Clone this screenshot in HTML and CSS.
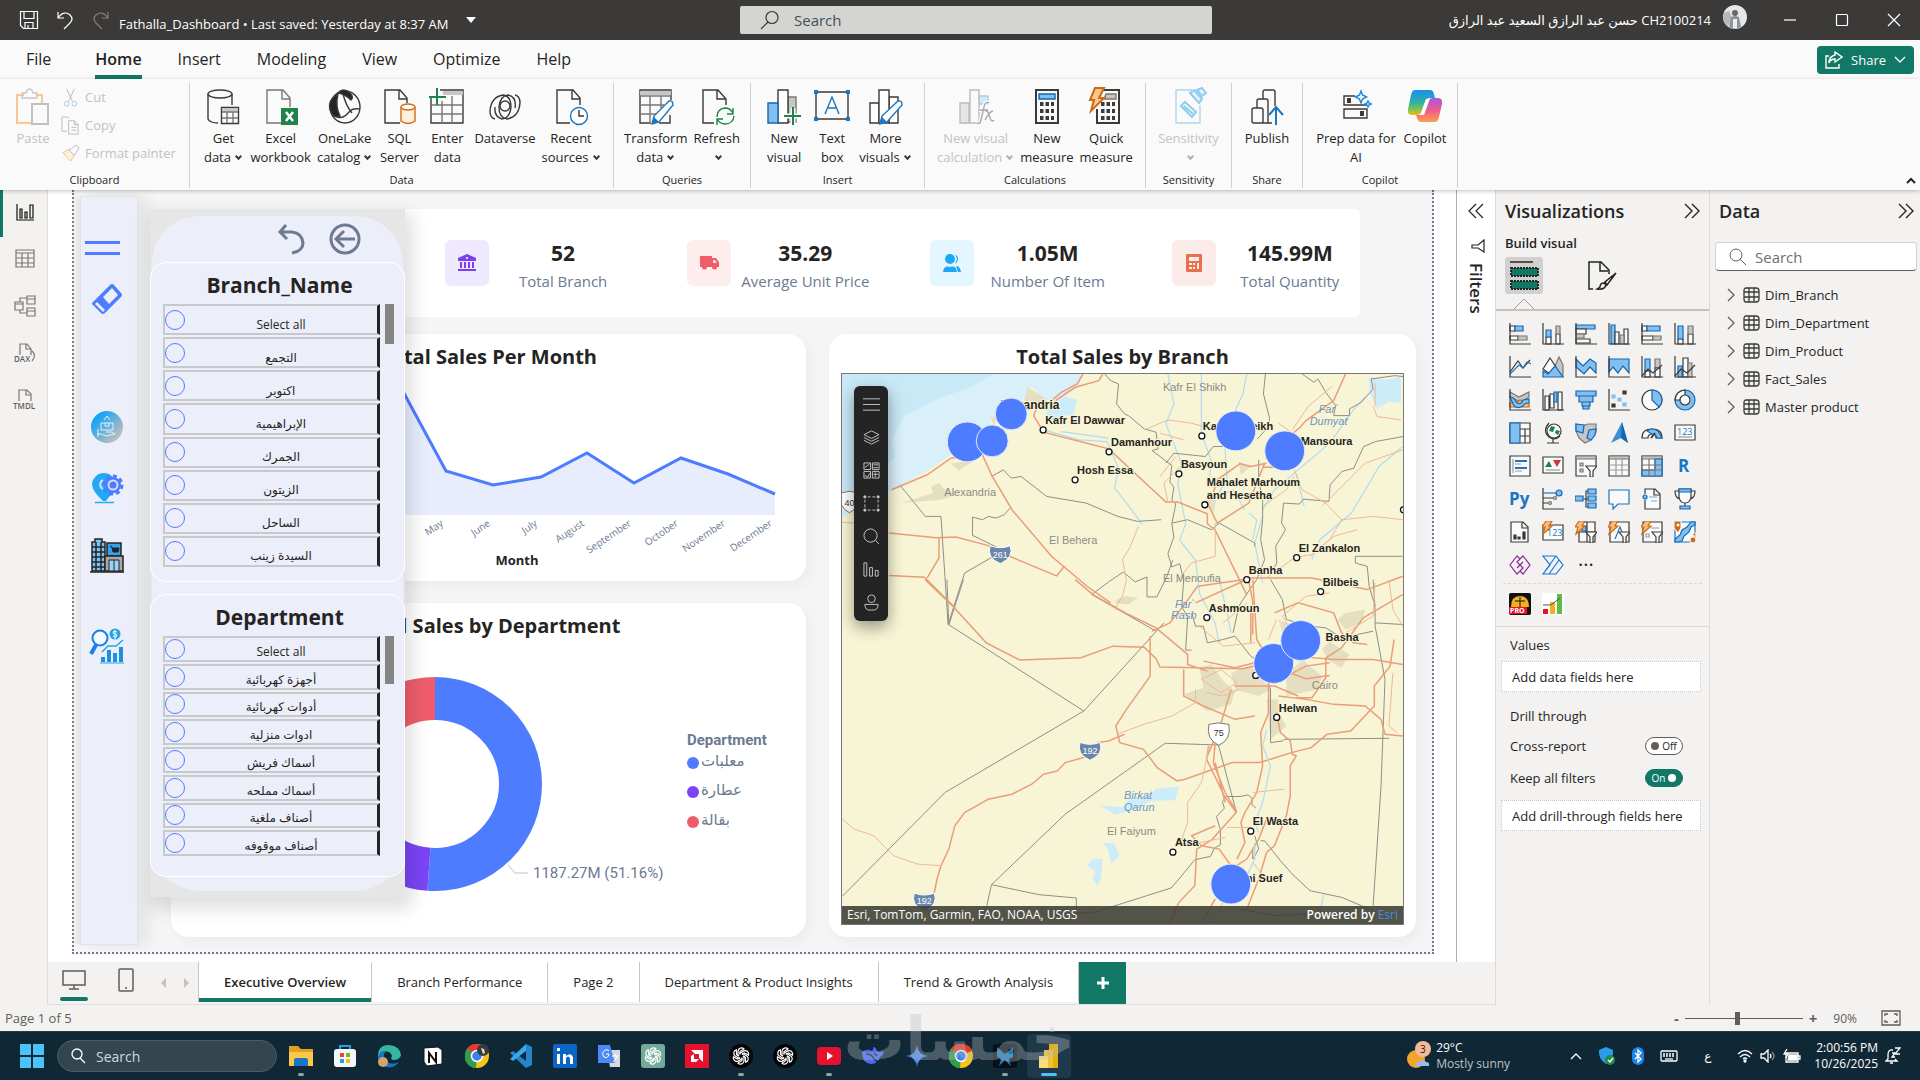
FILE: index.html
```html
<!DOCTYPE html>
<html lang="en">
<head>
    <meta charset="UTF-8">
    <meta name="viewport" content="width=device-width, initial-scale=1.0">
    <title>Fathalla_Dashboard</title>
    <link rel="stylesheet" href="styles.css">
</head>
<body>
    <!-- title bar -->
    <header class="titlebar">
        <div class="title-left">
            <button class="tb-btn" aria-label="Save"><svg width="20" height="20" viewBox="0 0 20 20"><path d="M1.500 1.500h17v17h-14l-3-3zM5 1.500v7h10v-7M6 18.500v-6h8v6M9 15v3"/></svg></button>
            <button class="tb-btn" aria-label="Undo"><svg width="20" height="20" viewBox="0 0 20 20"><path d="M3 2v6h6M3 8c4-6 9-6 12-3s2 6 0 8l-6 6"/></svg></button>
            <button class="tb-btn dim" aria-label="Redo"><svg width="20" height="20" viewBox="0 0 20 20"><path d="M17 2v6h-6M17 8c-4-6-9-6-12-3s-2 6 0 8l6 6"/></svg></button>
            <span class="file-name">Fathalla_Dashboard • Last saved: Yesterday at 8:37 AM</span>
            <svg class="file-caret" width="10" height="6" viewBox="0 0 10 6"><path d="M0 0h10L5 6z"/></svg>
        </div>
        <label class="title-search">
            <svg width="20" height="20" viewBox="0 0 20 20"><circle cx="12" cy="7.500" r="6"/><path d="M8 12l-7 7"/></svg>
            <input type="text" placeholder="Search" aria-label="Search">
        </label>
        <div class="title-right">
            <span class="user" dir="rtl">CH2100214 حسن عبد الرازق السعيد عبد الرازق</span>
            <svg class="avatar" width="24" height="24" viewBox="0 0 24 24"><circle cx="12" cy="12" r="12" fill="#e4e6e8"/><path d="M1 8a12 12 0 0 0 4 13l4-8-3-7z" fill="#b4b8ba"/><circle cx="12" cy="8" r="3" fill="#75665c"/><path d="M8 12q4-2 8 0l2 10q-6 3-12 0z" fill="#8d9498"/><path d="M10 14h4v9h-4z" fill="#eee"/></svg>
            <button class="win-btn" aria-label="Minimize"><svg width="14" height="14" viewBox="0 0 14 14"><path d="M1 7h12"/></svg></button>
            <button class="win-btn" aria-label="Maximize"><svg width="14" height="14" viewBox="0 0 14 14"><rect x="1.500" y="1.500" width="11" height="11" rx="1"/></svg></button>
            <button class="win-btn" aria-label="Close"><svg width="14" height="14" viewBox="0 0 14 14"><path d="M1 1l12 12M13 1L1 13"/></svg></button>
        </div>
    </header>

    <!-- ribbon -->
    <nav class="menu">
        <a href="#" class="file">File</a>
        <a href="#" class="active">Home</a>
        <a href="#">Insert</a>
        <a href="#">Modeling</a>
        <a href="#">View</a>
        <a href="#">Optimize</a>
        <a href="#">Help</a>
        <button class="share-btn"><svg width="18" height="18" viewBox="0 0 18 18"><path d="M4 5H1v12h13v-4M10 1l7 5-7 5V8c-3 0-5 1-6 4 0-5 2-7 6-8z"/></svg>Share<svg width="12" height="8" viewBox="0 0 12 8"><path d="M1 1l5 5 5-5"/></svg></button>
    </nav>
    <div class="ribbon">
        <section class="group g-clipboard">
            <div class="tools">
                <button class="tool off"><svg viewBox="0 0 34 36"><path d="M8 6H1v28h14M20 6h6v8" stroke="#f4c993" stroke-width="2"/><path d="M6 4h4q1-4 3.500-4t3.500 4h4v5H6z" stroke="#c8c8c8"/><path d="M16 15h16v20H16z" fill="#fafafa" stroke="#c0c0c0" stroke-width="2"/></svg>Paste</button>
                <div class="mini">
                    <button class="mini-btn"><svg viewBox="0 0 20 20"><path d="M6 1l6 13M14 1L8 14" stroke="#bbb"/><circle cx="6" cy="16.500" r="2.500" stroke="#9fcbe8"/><circle cx="14" cy="16.500" r="2.500" stroke="#9fcbe8"/></svg>Cut</button>
                    <button class="mini-btn"><svg viewBox="0 0 20 20"><path d="M6 16H1V1h6l2 2M8 5h6l4 4v10H8zM14 5v4h4M11 12h5M11 15h5" stroke="#bbb"/></svg>Copy</button>
                    <button class="mini-btn"><svg viewBox="0 0 20 20"><path d="M2 9l8 9 4-6-6-6z" fill="#fdf0dd" stroke="#f0bf85"/><path d="M8 6l6 6 2-3 3-5-3-3-5 4z" fill="#fafafa" stroke="#bbb"/></svg>Format painter</button>
                </div>
            </div>
            <h2>Clipboard</h2>
        </section>
        <section class="group g-data">
            <div class="tools">
                <button class="tool"><svg viewBox="0 0 34 36"><ellipse cx="14" cy="5" rx="12" ry="4"/><path d="M2 5v25q2 4 10 4M26 5v11"/><path d="M15.500 18.500h17v16h-17z" fill="#fafafa"/><path d="M16 19h16v4H16z" fill="#c8c6c4" stroke="none"/><path d="M16 23h16M16 29h16M21 23v11M27 23v11" stroke="#797775"/></svg>Get<br>data<i></i></button>
                <button class="tool"><svg viewBox="0 0 34 36"><path d="M18 34H3V1h16l7 8v9" stroke="#797775"/><path d="M18 1v9h8" stroke="#797775"/><path d="M17 19h17v17H17z" fill="#1d8348" stroke="none"/><path d="M22 23l7 9M29 23l-7 9" stroke="#fff" stroke-width="2.500"/></svg>Excel<br>workbook</button>
                <button class="tool"><svg viewBox="0 0 34 36"><ellipse cx="17" cy="18" rx="15" ry="16"/><path d="M10 4q5-6 12 0 4 4 1 7-6-6-13-7zM10 5Q-2 12 3 23q2 6 9 4-5-10-2-22z" fill="#252423"/><path d="M15 5q3 12 9 19M4 25q9 8 17-2 3-4 11-3"/></svg>OneLake<br>catalog<i></i></button>
                <button class="tool"><svg viewBox="0 0 34 36"><path d="M18 34H3V1h15l7 8v5M17 1v9h8"/><path d="M19 18v14q7 5 14 0V18" fill="#fdf0dd" stroke="#ce6b12"/><ellipse cx="26" cy="18" rx="7" ry="3" fill="#fff" stroke="#ce6b12"/></svg>SQL<br>Server</button>
                <button class="tool"><svg viewBox="0 0 34 36"><path d="M10 1h23v33H1V9"/><path d="M13 2h20v4H13z" fill="#c8c6c4" stroke="none"/><path d="M1 16h32M1 25h32M12 12v22M22 7v27" stroke="#797775"/><path d="M7-1v17M-1 8h17" stroke="#1d8348" stroke-width="2"/></svg>Enter<br>data</button>
                <button class="tool"><svg viewBox="0 0 34 36"><circle cx="17" cy="17" r="5"/><path d="M27 6q5 1 5 8-1 14-13 16-8-1-8-12 1-11 9-12 9 2 7 13M7 30q-5-1-5-8Q3 8 15 6q8 1 8 12-1 11-9 12-8-2-7-12"/></svg>Dataverse</button>
                <button class="tool"><svg viewBox="0 0 34 36"><path d="M16 34H3V1h16l7 8v7M18 1v9h8"/><circle cx="25" cy="27" r="8.500" fill="#fff" stroke="#1a76c0"/><path d="M25 21v6h5"/></svg>Recent<br>sources<i></i></button>
            </div>
            <h2>Data</h2>
        </section>
        <section class="group g-queries">
            <div class="tools">
                <button class="tool"><svg viewBox="0 0 34 36"><path d="M12 34H1V1h31v10M31 26v8H20"/><path d="M1 2h31v4H1z" fill="#c8c6c4" stroke="none"/><path d="M1 7h31M1 16h24M1 25h16M11 7v27M22 7v12" stroke="#797775"/><path d="M13 35l2-8 15-15q4-1 4 4L20 33z" fill="#fff" stroke="#1a76c0"/><path d="M13 35l2-7 5 5z" fill="#1a76c0" stroke="none"/></svg>Transform<br>data<i></i></button>
                <button class="tool"><svg viewBox="0 0 34 36"><path d="M14 34H3V1h15l8 9v6M17 1v9h9"/><path d="M17 28q0-8 8-9 5 0 8 5M33 19v6h-6M34 27q-1 8-9 8-5 0-8-5M17 36v-6h6" stroke="#1d8348"/></svg>Refresh<br><i></i></button>
            </div>
            <h2>Queries</h2>
        </section>
        <section class="group g-insert">
            <div class="tools">
                <button class="tool"><svg viewBox="0 0 34 36"><path d="M21 8h8v25h-8z" fill="#c8c6c4" stroke="#797775"/><path d="M11 1h10v33H11z" fill="#fff"/><path d="M1 14h10v20H1z" fill="#83beec" stroke="#1267b4"/><path d="M26 19v17M17 27h17" stroke="#fafafa" stroke-width="5"/><path d="M26 18v18M17 27h17" stroke="#1d8348" stroke-width="2"/></svg>New<br>visual</button>
                <button class="tool"><svg viewBox="0 0 34 36"><path d="M1 3h32v27H1z"/><path d="M10 25L17 8l7 17M12.500 19h9" stroke="#1a76c0"/><path d="M-1 1h4v4h-4zM31 1h4v4h-4zM-1 28h4v4h-4zM31 28h4v4h-4z" fill="#1a76c0" stroke="none"/></svg>Text<br>box</button>
                <button class="tool"><svg viewBox="0 0 34 36"><path d="M1 14h9v20H1zM20 8h9v26h-9z" fill="#fff"/><path d="M10 1h10v33H10z" fill="#fff"/><path d="M11 35l2-8 16-15q4-1 4 4L18 33z" fill="#fff" stroke="#1a76c0"/><path d="M11 35l2-7 5 5z" fill="#1a76c0" stroke="none"/></svg>More<br>visuals<i></i></button>
            </div>
            <h2>Insert</h2>
        </section>
        <section class="group g-calc">
            <div class="tools">
                <button class="tool off"><svg viewBox="0 0 34 36"><path d="M20 7h9v8h-9z" fill="#d4e8f6" stroke="#a8d0ea"/><path d="M1 14h9v20H1z" fill="#e6e6e6" stroke="#bbb"/><path d="M11 1h9v33h-9z" fill="#fafafa" stroke="#bbb"/><path d="M30 14q-4-2-5 4l-3 13q-1 5-4 3M20 21h9M26 22q3-1 4 4l2 5q1 2 3 0M34 22q-3 0-8 9" stroke="#fafafa" stroke-width="4"/><path d="M30 14q-4-2-5 4l-3 13q-1 5-4 3M20 21h9M26 22q3-1 4 4l2 5q1 2 3 0M34 22q-3 0-8 9" stroke="#aaa"/></svg>New visual<br>calculation<i></i></button>
                <button class="tool"><svg viewBox="0 0 34 36"><path d="M6 1h22v33H6z" stroke-width="2"/><path d="M9 5h16v5H9z" fill="#83beec" stroke="#1267b4"/><path d="M10 15h14M10 22h14M10 29h14" stroke-width="4" stroke-dasharray="3.500 2"/></svg>New<br>measure</button>
                <button class="tool"><svg viewBox="0 0 34 36"><path d="M14 1h16v33H8V20" stroke-width="2"/><path d="M17 5h10v5H15z" fill="#c8c6c4" stroke="#797775"/><path d="M12 15h14M12 22h14M12 29h14" stroke-width="4" stroke-dasharray="3.500 2"/><path d="M6-1h9L10 9h5L2 22l3-11H1z" fill="#f8c88e" stroke="#ce6b12" stroke-width="2"/></svg>Quick<br>measure</button>
            </div>
            <h2>Calculations</h2>
        </section>
        <section class="group g-sens">
            <div class="tools">
                <button class="tool off"><svg viewBox="0 0 34 36"><path d="M20 1H4v33h24V16" stroke="#a8d8f4"/><path d="M9 17l4-4 11 10-4 5zM12 17l9 8" fill="#fafafa" stroke="#8fcbee" stroke-width="2"/><path d="M18 4l9 10 3-4-8-9zM25 1l5 6 4-3-4-5z" fill="#e4f2fb" stroke="#8fcbee" stroke-width="2"/></svg>Sensitivity<br><i></i></button>
            </div>
            <h2>Sensitivity</h2>
        </section>
        <section class="group g-share">
            <div class="tools">
                <button class="tool"><svg viewBox="0 0 34 36"><path d="M11 34H4q-2 0-2-2V21q0-2 2-2h7q2 0 2 2v13zM7 19v-7q0-2 2-2h7q2 0 2 2v22h-7M13 10V3q0-2 2-2h8q2 0 2 2v14M18 34h4"/><path d="M26 36V18M19 26l7-8 7 8" stroke="#1a76c0" stroke-width="2"/></svg>Publish</button>
            </div>
            <h2>Share</h2>
        </section>
        <section class="group g-copilot">
            <div class="tools">
                <button class="tool prep"><svg viewBox="0 0 34 36"><path d="M16 7H5v9h23M5 20h23v9H5z"/><path d="M8 9h4v5H8zM21 22h4v5h-4z" fill="#3b3a39" stroke="none"/><path d="M22 2l1.500 4 4 2-4 2-1.500 4-1.500-4-4-2 4-2zM29 12l1 2 2 1-2 1-1 2-1-2-2-1 2-1z" stroke="#1a86d9"/></svg>Prep data for AI</button>
                <button class="tool"><svg viewBox="0 0 34 36"><defs><linearGradient id="cp1" x1="0" y1="0" x2="0" y2="1"><stop offset="0" stop-color="#1a8df0"/><stop offset=".5" stop-color="#2fb3a0"/><stop offset=".8" stop-color="#8bc34a"/><stop offset="1" stop-color="#f5b91c"/></linearGradient><linearGradient id="cp2" x1="0" y1="0" x2="0" y2="1"><stop offset="0" stop-color="#a458e8"/><stop offset=".5" stop-color="#ee5a8e"/><stop offset="1" stop-color="#f9a14c"/></linearGradient></defs><path d="M7 1h15q3 0 4 4l1 4h-5q-4 0-5 4l-3 9q-1 4-5 4H4q-5 0-4-6L3 6q1-5 4-5z" fill="url(#cp1)" stroke="none"/><path d="M27 33H13q-3 0-4-4l-1-3h4q4 0 5-4l3-9q1-4 5-4h5q5 0 4 6l-3 13q-1 5-4 5z" fill="url(#cp2)" stroke="none"/><path d="M18 10h4l-6 16h-4z" fill="#fff" stroke="none" opacity=".85"/></svg>Copilot</button>
            </div>
            <h2>Copilot</h2>
        </section>
        <button class="collapse" aria-label="Collapse ribbon"><svg width="10" height="7" viewBox="0 0 10 7"><path d="M1 6l4-4 4 4"/></svg></button>
    </div>

    <div class="workspace">
        <!-- view switcher -->
        <aside class="rail">
            <button class="rail-btn active" aria-label="Report view"><svg viewBox="0 0 22 22"><path d="M3 3v16h17M6 8h2v9H6zM11 11h2v6h-2zM16 4h3v13h-3z" stroke="#111"/></svg></button>
            <button class="rail-btn" aria-label="Table view"><svg viewBox="0 0 22 22"><path d="M2 2h18v17H2zM2 5h18M2 10h18M2 15h18M8 5v14M14 5v14"/></svg></button>
            <button class="rail-btn" aria-label="Model view"><svg viewBox="0 0 22 22"><path d="M1 7h8v8H1zM13 1h8v8h-8zM13 13h8v8h-8zM1 9h8M13 4h8M13 16h8M6 7V3h7M6 15v3h7"/></svg></button>
            <button class="rail-btn" aria-label="DAX query view"><svg viewBox="0 0 22 22"><path d="M6 13V2h7l4 5v6M12 2v5h5M18 9q5 4 0 10"/><text x="0" y="20">DAX</text></svg></button>
            <button class="rail-btn" aria-label="TMDL view"><svg viewBox="0 0 22 22"><path d="M5 12V1h8l4 4v7M12 1v5h5"/><text x="-1" y="20">TMDL</text></svg></button>
        </aside>

        <div class="center">
            <main class="canvas">
                <div class="report">
                    <div class="sidebar">
                        <button class="side-btn lines" aria-label="Toggle panel"></button>
                        <button class="side-btn eraser" aria-label="Clear filters"><svg width="34" height="34" viewBox="0 0 34 34"><path d="M3 20L20 3q2-2 4 0l7 8q2 2 0 4L15 31q-2 2-4 0l-8-8q-2-1 0-3z" fill="#4d7cff"/><path d="M13 15l9-9 6 7-9 9zM7 20l8 8-2 2-8-8z" fill="#eceff9"/></svg></button>
                        <button class="side-btn s1" aria-label="Product"><svg width="34" height="34" viewBox="0 0 34 34"><defs><linearGradient id="sg" x1="0" y1="0" x2="1" y2="1"><stop offset=".2" stop-color="#18a4f4"/><stop offset=".8" stop-color="#b8bcc0"/></linearGradient></defs><circle cx="17" cy="17" r="16" fill="url(#sg)"/><path d="M7 24h4l5 2 9-2-3-2h-6M11 13h12v7H11zM15 13v3h4v-3M14 10l3-4 3 4M8 19v8" stroke="#dff2fc" fill="none"/></svg></button>
                        <button class="side-btn s2" aria-label="Locations"><svg width="34" height="34" viewBox="0 0 34 34"><path d="M14 2a12 12 0 0 1 10 6v14q-5 3-8 8h-3Q2 20 2 13A12 12 0 0 1 14 2z" fill="#21a9f5"/><path d="M5 31.500h19" stroke="#21a9f5" stroke-width="1.500"/><circle cx="23" cy="14" r="8" fill="#4d7cff"/><circle cx="23" cy="14" r="9" fill="none" stroke="#4d7cff" stroke-width="3" stroke-dasharray="4 3"/><circle cx="23" cy="14" r="4.500" fill="none" stroke="#cfe0ff" stroke-width="2"/><path d="M13 9a5 5 0 0 0 0 9" fill="none" stroke="#cfe0ff" stroke-width="2"/></svg></button>
                        <button class="side-btn s3" aria-label="Branches"><svg width="36" height="38" viewBox="0 0 36 38"><path d="M6 2h7v3h3v29H3V5h3z" fill="#7cc2f5" stroke="#252423" stroke-width="1.500"/><path d="M3 10h13M3 15h13M3 20h13M3 25h13M3 30h13M7 5v29M12 5v29M1 35h34" stroke="#252423" stroke-width="1.500"/><path d="M18 6h14v13H18z" fill="#35a0ee" stroke="#252423" stroke-width="1.500"/><path d="M21 9l2 1 1 5h5l1-4h-7" fill="#252423" stroke="#252423"/><path d="M16 19h18v15H16z" fill="#a9a9a9" stroke="#252423" stroke-width="1.500"/><path d="M20 23h10v11H20z" fill="#9bd4fb" stroke="#252423"/><path d="M25 23v11" stroke="#252423"/></svg></button>
                        <button class="side-btn s4" aria-label="Trends"><svg width="36" height="36" viewBox="0 0 36 36"><circle cx="11" cy="10" r="7.500" fill="#f4f8ff" stroke="#1a7fe8" stroke-width="2"/><path d="M7 17l-5 9" stroke="#1a7fe8" stroke-width="4"/><circle cx="26" cy="6" r="5.500" fill="#22a6e0"/><path d="M28 4q-4-2-4 0 0 2 2 2t2 2q-1 2-4 0M26 2v9" fill="none" stroke="#fff"/><path d="M13 24l6-6h8l7-6" fill="none" stroke="#22a6e0" stroke-width="1.500"/><path d="M12 29h4v5h-4zM18 22h4v12h-4zM24 25h4v9h-4zM30 19h4v15h-4z" fill="#1a8fe4"/><path d="M11 35h24" stroke="#22a6e0"/></svg></button>
                    </div>

                    <div class="board">
                        <div class="kpis">
                            <div class="kpi"><span class="tile t1"><svg width="20" height="18" viewBox="0 0 20 18"><path d="M10 0l9 4v3H1V4zM3 8h2v6H3zM7 8h2v6H7zM11 8h2v6h-2zM15 8h2v6h-2zM1 15h18v2H1z" fill="#7b3ff2"/><circle cx="10" cy="4" r="1" fill="#fff"/></svg></span><p><b>52</b>Total Branch</p></div>
                            <div class="kpi"><span class="tile t2"><svg width="20" height="16" viewBox="0 0 20 16"><path d="M1 1h12v2h4l3 4v5h-2a2.500 2.500 0 0 1-5 0H8a2.500 2.500 0 0 1-5 0H1z" fill="#ef5d68"/><path d="M14 5h2l2 3h-4z" fill="#fbd9d4"/></svg></span><p><b>35.29</b>Average Unit Price</p></div>
                            <div class="kpi"><span class="tile t3"><svg width="20" height="18" viewBox="0 0 20 18"><circle cx="8" cy="5" r="5" fill="#1ba8f5"/><path d="M1 18q1-7 7-5 6-2 7 5z" fill="#1ba8f5"/><path d="M13 0q6 5 0 10l2-5zM14 12q4 0 5 6h-3z" fill="#1ba8f5"/></svg></span><p><b>1.05M</b>Number Of Item</p></div>
                            <div class="kpi"><span class="tile t4"><svg width="16" height="18" viewBox="0 0 16 18"><rect width="16" height="18" rx="1" fill="#e8704a"/><path d="M3 3h10v4H3zM3 9h3v2H3zM3 13h3v2H3zM7 9h2v2H7zM7 13h2v2H7zM11 9h2v6h-2z" fill="#fdeeea"/></svg></span><p><b>145.99M</b>Total Quantity</p></div>
                        </div>

                        <div class="cards">
                            <section class="card c-line">
                                <h3>Total Sales Per Month</h3>
                                <svg class="plot" viewBox="0 0 635 207">
                                    <path d="M87 59L134 19 181 34 228 12 275 99 322 113 370 105 416 81 463 111 510 86 557 102 604 122V143H87z" fill="#e8edfe"/>
                                    <path d="M87 59L134 19 181 34 228 12 275 99 322 113 370 105 416 81 463 111 510 86 557 102 604 122" fill="none" stroke="#4d7cff" stroke-width="3"/>
                                    <g class="months">
                                        <text transform="translate(273 153) rotate(-34)">May</text>
                                        <text transform="translate(320 153) rotate(-34)">June</text>
                                        <text transform="translate(367 153) rotate(-34)">July</text>
                                        <text transform="translate(414 153) rotate(-34)">August</text>
                                        <text transform="translate(461 153) rotate(-34)">September</text>
                                        <text transform="translate(508 153) rotate(-34)">October</text>
                                        <text transform="translate(555 153) rotate(-34)">November</text>
                                        <text transform="translate(602 153) rotate(-34)">December</text>
                                    </g>
                                    <text class="axis-title" x="346" y="193">Month</text>
                                </svg>
                            </section>
                            <section class="card c-donut">
                                <h3>Total Sales by Department</h3>
                                <svg class="plot" viewBox="0 0 635 294">
                                    <g fill="none" stroke-width="43" transform="rotate(-90 264 143)">
                                        <circle cx="264" cy="143" r="85.500" stroke="#4d7cff" pathLength="100" stroke-dasharray="51.160 100"/>
                                        <circle cx="264" cy="143" r="85.500" stroke="#7b44f5" pathLength="100" stroke-dasharray="26 100" stroke-dashoffset="-51.160"/>
                                        <circle cx="264" cy="143" r="85.500" stroke="#ef5d6c" pathLength="100" stroke-dasharray="22.840 100" stroke-dashoffset="-77.160"/>
                                    </g>
                                    <path d="M337 224l7 8h13" fill="none" stroke="#bcc1cb"/>
                                    <text class="callout" x="362" y="237">1187.27M (51.16%)</text>
                                    <text class="legend-title" x="516" y="104">Department</text>
                                    <circle cx="522" cy="122" r="6" fill="#4d7cff"/>
                                    <circle cx="522" cy="151" r="6" fill="#7b44f5"/>
                                    <circle cx="522" cy="181" r="6" fill="#ef5d6c"/>
                                    <text class="legend" x="530" y="125">معلبات</text>
                                    <text class="legend" x="530" y="154">عطارة</text>
                                    <text class="legend" x="530" y="184">بقالة</text>
                                </svg>
                            </section>
                            <section class="card c-map">
                                <h3>Total Sales by Branch</h3>
                                <div class="map">
                                    <svg class="map-svg" viewBox="0 0 563 551" preserveAspectRatio="xMidYMid slice">
                                        <rect width="563" height="551" fill="#f7f5d5"/>
                                        <g transform="scale(.3954 .3333) translate(-53 -552)">
                                            <path class="sea" d="M53 552H665L655 590 610 625 560 635 545 600 530 590 525 620 495 640 470 660 432 690 432 715 400 745 330 795 260 850 200 890 150 920 53 985z"/>
                                            <path class="sea deep" d="M53 552H440L380 590 290 630 210 680 180 750 190 800 130 870 53 920z"/>
                                            <path class="lake" d="M580 640l40-20 30 10-10 50-30-5 5 30-45-20zM1390 560l40 10 40-10v80l-30-5-30 20-20-50z"/>
                                            <path class="urban" d="M525 590l10 10 40 30-30 20-40 30zM280 890l20-10 15 20 30 15-40 15-100 10 80-30zM330 820l60-8-40 30zM430 680l15 5-5 25zM750 1230l20-10 35 5-30 20-30-5zM1060 820l30 10-25 25zM975 930l30-10-10 50z"/>
                                            <g transform="translate(0 1170)">
                                                <path class="urban" d="M960 265l30-10 30 50 30 30-10 40-60 20-60-50 50-20zM1040 280l50-20 50 70-30 20-60-20zM1180 290l40-50 50 50-10 40-80 20zM1270 210l20-25 50 40-20 40-30-20zM1330 100l50-10-10 40-40 20-20-30zM1160 120l60 30-30 30-20-20zM1130 360h30v40l20 40-40 40zM755 60l20-10 25 5-20 20z"/>
                                                <path class="lake" d="M705 678l20 2 40 5 20-30 50-5 15-22 58-5-10 40-60 2-30 20-60 22zM715 790l30 5 12 35-20 25-8-40zM690 840h25l-5 60-8 22-12-22 5-25-20-15z"/>
                                            </g>
                                            <g class="river">
                                                <path d="M880 552l15 90-20 60 40 120-10 60 20 120-15 50 40 60 10 100 40 90 10 60"/>
                                                <path d="M1080 552l-10 60-35 90-10 80 5 90-30 50"/>
                                                <path d="M965 552v180l25 80-5 60M565 720l90 30 70 5 30 80-10 60 40 60 30 50M610 725l120 20"/>
                                                <path d="M1120 960l30-60 80-80 60-60 60-100 30-40M1120 980l-20 80 20 120M1475 770l-60 60-70 140-80 80-20 60"/>
                                                <path d="M1085 970l20 20-10 60M1075 960l-30-60-20 10M1205 850l20 100M1010 1170l20 100 10 60"/>
                                            </g>
                                            <g class="border">
                                                <path d="M720 552l15 20 20 10-5 60 20 30 10 5 40 40 30 10 5 50-15 5 50 45-5 50 10 15-5 40 10 10-10 60 5 40-15 50 10 40 20-10 10 50-5 80 15 30-5 100 15 0"/>
                                                <path d="M1127 552l-5 60 15 70 0 25-30 40M1110 810l0 60 10 60 0 60-5 60 10 60-20 60-35 60-10 20-15 80"/>
                                                <path d="M1220 552l30 25 10-10 20 40 25 40-5 30 40 0 0-20 30-20 30-40-5-30 60-10 40 5M1476 740l-70 15-30 15-25 65-30 10-30 40-3 50-65-7-10 15-40-3-5 60 10 20-25 50 3 50-15 30"/>
                                                <path d="M200 885l35 50 30 45 40 0 10 180 8 145L365 1150l110-75M480 955l-15 20-20 10-20-5-15 10-25-8 0 55 60 35 22 20M433 860l30-20 20 25 25-5 65 60 100 20 80 40 50 15 60-5"/>
                                                <path d="M875 820l20-30 80 10 20-30 40 0 60-20M890 1000l40-10 60 30 20-20 90 60 0 10M687 1215l45-40 35-28 30 30 30-15 0 60 25 0 25-60 15-50"/>
                                                <path d="M1355 1100l120 0M1355 1100l0 20 30 10 5 60 15 60"/>
                                            </g>
                                            <g class="border" transform="translate(0 1170)">
                                                <path d="M320 0l5 136L362 0M325 136L667 395 870 130M687 45l163 110M667 395L315 640 55 952M433 917L620 705 873 492 1008 497l45 200M433 917l-15 80M433 917l120 30 95 10 0 45 40 0 200-75 15-20 45-65 40-10 10-25 15-10 0-45-10-40 20-25-5-20 10-15 35 0 20-5 10 10 0 20 10 10"/>
                                                <path d="M940 100l10 40 20 0 10 50 40-10 30-10 40 60 25 20 15 50 10 30 0 140 0 20 30-5 5-5 265-3M1400 0l5 90 0 50 25 160-10 320-20 360M1115 785l10 0 40 60 30 40 45 50 80 20 80 40M1140 0l30 60 10 60 60 20 40 5 40 30 80-20M1405 130l70 5"/>
                                                <path d="M1095 810l0 30 15-30-10-40M1060 990l90 20 80-5"/>
                                            </g>
                                            <g class="road">
                                                <path d="M665 552l-15 30-40 25-30 30-30 10-10 30 25 50 100 30 65 20 145 160 30 0 75 35 0 30 20 20 70 170 10 25"/>
                                                <path d="M180 900l90-45 60-50 80-10 25 65 50 100 100 140 90 90 60 50M173 1030l120 14 50-2 80 25 30 20 145 72 20-30M300 1045v60l-30 60M173 1158l90 5 80 95"/>
                                                <path d="M715 552l-10 20-60 20-50 40M1330 552l-30 80-70 60-15 20-20 20-20 100-55 0M1060 820l30 10 40-10M980 940l25 60 80-60 40-120"/>
                                                <path d="M1085 1165l160 0 60 15 80 20 90-40M1085 1175l10 60 0 100M990 930l15-60 60-50M950 1240l120-65"/>
                                            </g>
                                            <g class="road thin">
                                                <path d="M53 998l35 2M805 1010l-20 60-20 40 10 60-10 50-20 40M820 720l60-30 60 10 60 20M880 940l-10-60 50-60 50 0M1160 700l60 50 80 0M1200 840l20 60 60 40 40 50-30 60-50 50"/>
                                                <path d="M1320 990l80-10 75 10M1400 650l10 30 60 10M1405 650v-70M1270 950l110-130 95-40M1120 950l60-50 20-40M920 750l-60-20M900 800l-40 60M1000 1000l0 100-60 20-40 60M1130 1165l70-60 40-10M1240 1100l60-60 60-20M1195 720l40-70 60-60"/>
                                            </g>
                                            <g class="road" transform="translate(0 1170)">
                                                <path d="M265 0l70 80 85 110 85 52 155-7 80-35 80 3 30 35 10 25 210 5 50-15 40 15 70 30 60-10M645 0l45 45 90 60 70 40 80 80 0 30 50 20M835 170l0 120-60 100-27 50 10 50 60 20 35 55 50 40 20-5 120-50 70 0 80-30 50-15 40-40 60-10 60-75 0-60 40-60 10-80"/>
                                                <path d="M955 20l-30 50-40 60-45 25M955 20l120-20M1095 0l10 180 30 60 0 100 0 60-20 60 5 100-15 80-30 60-10 30 10 60-20 50M1090 100l0 90M1155 400l10 60 25 25 5 40 10 5-15 30 0 90-10 60-30 90-20 20-20 80-30 90"/>
                                                <path d="M1160 350l70 10 70 15 80 5 40 40 10 45 45 5M1475 45l-100 70-55 90-40 30 0 60-35 60-40 0M1150 100l60-30 90 30 20 60 30 30 35 5M1200 230l100 10 100 0 75 15M1000 490l-5 60 30 90 30 60M920 270l0 80 50 30 80 40 50-10M970 245l80 20 50-15M1050 320l100 0 60 30M1040 330l-25 100-35 100M983 500l-5 40 45 110 30 50-60 80-40 30-5 110-40 50-30 80M1000 550l25 120M305 860l20-50 15-70 25-40 60-40 60-15 50-30 30-30 35-10 20-25 60-20M305 860l-10 40-10 60-20 40M700 490l30-5 40-20M1040 860l-30-50-45-10-25-30 60-30"/>
                                                <path d="M1130 720l-20 60-30 60-40 30M1000 960l-30 60M1180 290l50-30 60-10"/>
                                            </g>
                                            <g class="road thin" transform="translate(0 1170)">
                                                <path d="M55 720l30 30 50 20 50 60 60 25 60 5M750 465l70-30 70-25 60-40 0-40M985 500l-20 110-35 60 0 60-15 50 50 10 60-15M1095 640l80-10M1030 745l60 0M1095 850l20 30M1200 170l-30-60 60-60 60-10M1330 160l70-50 5-100M1450 280l-10 160 20 20M1440 0l10 90 25 50M960 140l60 60 80-10M1080 70l-60 60M1155 120l-20 60"/>
                                                <path d="M965 300l50-30 40 40-40 30zM980 340l40 10 40-20"/>
                                            </g>
                                            <path class="river" d="M1130 1620l-10 50 20 60-20 110-20 60 10 30M1100 1960l0 50-20 50M1020 2140l-30 60M1275 2115l-10 60"/>
                                        </g>
                                        <g class="shield">
                                            <path d="M149 172q10 4 20 0 4 12-10 18-14-6-10-18zM239 369q10 4 20 0 4 12-10 18-14-6-10-18zM73 520q10 4 20 0 4 12-10 18-14-6-10-18z"/>
                                            <text x="159" y="184">261</text><text x="249" y="381">192</text><text x="83" y="531">192</text>
                                        </g>
                                        <g class="shield-w">
                                            <path d="M368 351q10-3 20 0 3 15-10 21-13-6-10-21zM0 119q9-3 16 0 3 15-8 20-5-2-8-8z"/>
                                            <text x="378" y="363">75</text><text x="8" y="132">40</text>
                                        </g>
                                        <g class="city-dots">
                                            <circle cx="202" cy="56" r="3"/><circle cx="268" cy="78" r="3"/><circle cx="234" cy="106" r="3"/><circle cx="338" cy="100" r="3"/><circle cx="361" cy="62" r="3"/><circle cx="364" cy="131" r="3"/><circle cx="456" cy="184" r="3"/><circle cx="406" cy="206" r="3"/><circle cx="480" cy="218" r="3"/><circle cx="366" cy="244" r="3"/><circle cx="436" cy="344" r="3"/><circle cx="332" cy="479" r="3"/><circle cx="410" cy="458" r="3"/><circle cx="415" cy="302" r="3"/><circle cx="563" cy="136" r="3"/>
                                        </g>
                                        <g class="city">
                                            <text class="big" x="157" y="35">Alexandria</text>
                                            <text x="204" y="50">Kafr El Dawwar</text>
                                            <text x="270" y="72">Damanhour</text>
                                            <text x="236" y="100">Hosh Essa</text>
                                            <text x="340" y="94">Basyoun</text>
                                            <text x="362" y="56">Kafr Alsheikh</text>
                                            <text x="460" y="71">Mansoura</text>
                                            <text x="366" y="112">Mahalet Marhoum</text>
                                            <text x="366" y="125">and Hesetha</text>
                                            <text x="458" y="178">El Zankalon</text>
                                            <text x="408" y="200">Banha</text>
                                            <text x="482" y="212">Bilbeis</text>
                                            <text x="368" y="238">Ashmoun</text>
                                            <text x="485" y="267">Basha</text>
                                            <text x="438" y="339">Helwan</text>
                                            <text x="334" y="473">Atsa</text>
                                            <text x="412" y="452">El Wasta</text>
                                            <text x="391" y="509">Beni Suef</text>
                                        </g>
                                        <g class="region">
                                            <text x="322" y="17">Kafr El Shikh</text>
                                            <text x="103" y="122">Alexandria</text>
                                            <text x="208" y="170">El Behera</text>
                                            <text x="322" y="208">El Menoufia</text>
                                            <text x="471" y="316">Cairo</text>
                                            <text x="266" y="462">El Faiyum</text>
                                        </g>
                                        <g class="water">
                                            <text x="478" y="39">Far`</text><text x="469" y="51">Dumyat</text>
                                            <text x="334" y="234">Far`</text><text x="330" y="245">Rash</text>
                                            <text x="283" y="426">Birkat</text><text x="283" y="438">Qarun</text>
                                        </g>
                                        <g class="pins">
                                            <circle cx="126" cy="68" r="20"/><circle cx="151" cy="67" r="16"/><circle cx="170" cy="40" r="16"/><circle cx="395" cy="57" r="20"/><circle cx="444" cy="77" r="20"/><circle cx="433" cy="290" r="20"/><circle cx="460" cy="267" r="20"/><circle cx="390" cy="511" r="20"/>
                                        </g>
                                    </svg>
                                    <div class="map-tools">
                                        <button aria-label="Menu"><svg viewBox="0 0 18 18"><path d="M0 3h18M0 9h18M0 15h18"/></svg></button>
                                        <button aria-label="Layers"><svg viewBox="0 0 18 18"><path d="M9 2l8 4-8 4-8-4zM1 9l8 4 8-4M1 12l8 4 8-4"/></svg></button>
                                        <button aria-label="Basemap"><svg viewBox="0 0 18 18"><path d="M1 1h7v7H1zM10 1h7v7h-7zM1 10h7v7H1zM10 10h7v7h-7zM2 6l5-4M11 3h5M11 6h5M2 14l3 2 2-4M11 13h5M13 11v5"/></svg></button>
                                        <button aria-label="Select"><svg viewBox="0 0 18 18"><path d="M5 2h8M5 16h8M2 5v8M16 5v8" stroke-dasharray="3 2"/><path d="M1 1h2v2H1zM15 1h2v2h-2zM1 15h2v2H1zM15 15h2v2h-2z" fill="#d0d0d0"/></svg></button>
                                        <button aria-label="Find"><svg viewBox="0 0 18 18"><circle cx="8" cy="8" r="7"/><path d="M13 13l4 4"/></svg></button>
                                        <button aria-label="Analysis"><svg viewBox="0 0 18 18"><path d="M1 2h3v14H1zM7 7h3v9H7zM13 10h3v6h-3z"/></svg></button>
                                        <button aria-label="Account"><svg viewBox="0 0 18 18"><circle cx="9" cy="5" r="4"/><path d="M2 11h14q0 7-7 6-7 1-7-6z"/></svg></button>
                                    </div>
                                    <div class="map-foot"><span>Esri, TomTom, Garmin, FAO, NOAA, USGS</span><span class="powered">Powered by <a href="#">Esri</a></span></div>
                                </div>
                            </section>
                        </div>
                    </div>

                    <!-- slicer panel that opens over the report -->
                    <div class="panel">
                        <div class="panel-in">
                            <div class="panel-nav">
                                <button aria-label="Reset"><svg width="28" height="32" viewBox="0 0 28 32"><path d="M9 2L3 9l7 7M3 9h12q10 1 11 11 0 8-11 10"/></svg></button>
                                <button aria-label="Back"><svg width="32" height="32" viewBox="0 0 32 32"><circle cx="16" cy="16" r="14"/><path d="M26 16H8M15 8l-8 8 8 8"/></svg></button>
                            </div>
                            <fieldset class="slicer branch">
                                <legend>Branch_Name</legend>
                                <div class="opts">
                                    <label><input type="radio" name="branch"><span>Select all</span></label>
                                    <label><input type="radio" name="branch"><span>التجمع</span></label>
                                    <label><input type="radio" name="branch"><span>اكتوبر</span></label>
                                    <label><input type="radio" name="branch"><span>الإبراهيمية</span></label>
                                    <label><input type="radio" name="branch"><span>الجمرك</span></label>
                                    <label><input type="radio" name="branch"><span>الزيتون</span></label>
                                    <label><input type="radio" name="branch"><span>الساحل</span></label>
                                    <label><input type="radio" name="branch"><span>السيدة زينب</span></label>
                                </div>
                                <div class="thumb"></div>
                            </fieldset>
                            <fieldset class="slicer dept">
                                <legend>Department</legend>
                                <div class="opts">
                                    <label><input type="radio" name="dept"><span>Select all</span></label>
                                    <label><input type="radio" name="dept"><span>أجهزة كهربائية</span></label>
                                    <label><input type="radio" name="dept"><span>أدوات كهربائية</span></label>
                                    <label><input type="radio" name="dept"><span>ادوات منزلية</span></label>
                                    <label><input type="radio" name="dept"><span>أسماك فريش</span></label>
                                    <label><input type="radio" name="dept"><span>أسماك مملحه</span></label>
                                    <label><input type="radio" name="dept"><span>أصناف ملغية</span></label>
                                    <label><input type="radio" name="dept"><span>أصناف موقوفه</span></label>
                                </div>
                                <div class="thumb"></div>
                            </fieldset>
                        </div>
                    </div>
                </div>
                <aside class="filters">
                    <button aria-label="Expand filters"><svg width="16" height="16" viewBox="0 0 16 16"><path d="M8 1L1 8l7 7M15 1L8 8l7 7"/></svg></button>
                    <svg class="funnel" width="14" height="14" viewBox="0 0 14 14"><path d="M13 1v12L7 9H1V6h6z"/></svg>
                    <span>Filters</span>
                </aside>
            </main>

            <nav class="pages">
                <button class="dev on" aria-label="Desktop layout"><svg width="24" height="20" viewBox="0 0 24 20"><path d="M1 1h22v14H1zM12 15v4M7 19h10"/></svg></button>
                <button class="dev" aria-label="Mobile layout"><svg width="16" height="24" viewBox="0 0 16 24"><rect x="1" y="1" width="14" height="22" rx="1"/><path d="M7 20h2"/></svg></button>
                <button class="arrow" aria-label="Previous"><svg width="5" height="10" viewBox="0 0 5 10"><path d="M5 0v10L0 5z"/></svg></button>
                <button class="arrow" aria-label="Next"><svg width="5" height="10" viewBox="0 0 5 10"><path d="M0 0v10l5-5z"/></svg></button>
                <a href="#" class="page on">Executive Overview</a>
                <a href="#" class="page">Branch Performance</a>
                <a href="#" class="page">Page 2</a>
                <a href="#" class="page">Department &amp; Product Insights</a>
                <a href="#" class="page">Trend &amp; Growth Analysis</a>
                <button class="add" aria-label="New page"><svg width="14" height="14" viewBox="0 0 14 14"><path d="M7 1v12M1 7h12"/></svg></button>
            </nav>
        </div>

        <aside class="viz">
            <div class="pane-head"><h2>Visualizations</h2><button aria-label="Collapse"><svg width="16" height="16" viewBox="0 0 16 16"><path d="M1 1l7 7-7 7M8 1l7 7-7 7"/></svg></button></div>
            <h3>Build visual</h3>
            <div class="modes">
                <button class="mode on" aria-label="Build"><svg width="29" height="30" viewBox="0 0 29 30"><path d="M0 1h23" stroke="#252423" stroke-width="1.500"/><path d="M1 7h27v8H1zM1 20h27v8H1z" fill="#117865" stroke="#252423" stroke-width="2" stroke-dasharray="2 1"/></svg></button>
                <button class="mode" aria-label="Format"><svg width="30" height="30" viewBox="0 0 30 30"><path d="M6 28H2V1h12l8 8v4M13 1v9h8M29 12L18 21l2 3zM17 22q-4 0-4 4l-3 2q8 1 9-4z" fill="none" stroke="#252423" stroke-width="1.500"/></svg></button>
            </div>
            <div class="notch"><svg width="22" height="11" viewBox="0 0 22 11"><path d="M1 11L11 1l10 10"/></svg></div>
            <div class="icons">
                <button aria-label="Stacked bar"><svg viewBox="0 0 22 22"><path class="w" d="M1 3h5v5H1zM1 13h8v4H1z"/><path class="b" d="M6 3h8v5H6z"/><path class="g" d="M9 13h9v4H9z"/><path d="M1 0v21h21"/></svg></button>
                <button aria-label="Stacked column"><svg viewBox="0 0 22 22"><path class="w" d="M4 14h5v7H4zM14 11h4v10h-4z"/><path class="b" d="M4 7h5v7H4z"/><path class="g" d="M14 3h4v8h-4z"/><path d="M1 0v21h21"/></svg></button>
                <button aria-label="Clustered bar"><svg viewBox="0 0 22 22"><path class="b" d="M1 2h19v4H1z"/><path class="w" d="M1 6h10v5H1zM1 16h14v4H1z"/><path class="g" d="M1 11h8v4H1z"/><path d="M1 0v21h21"/></svg></button>
                <button aria-label="Clustered column"><svg viewBox="0 0 22 22"><path class="b" d="M3 2h4v19H3z"/><path class="w" d="M7 9h4v12H7zM16 6h4v15h-4z"/><path class="g" d="M12 12h4v9h-4z"/><path d="M1 0v21h21"/></svg></button>
                <button aria-label="100% stacked bar"><svg viewBox="0 0 22 22"><path class="w" d="M1 3h5v5H1zM1 13h11v4H1z"/><path class="b" d="M6 3h13v5H6z"/><path class="g" d="M12 13h8v4h-8z"/><path d="M1 0v21h21"/></svg></button>
                <button aria-label="100% stacked column"><svg viewBox="0 0 22 22"><path class="w" d="M4 16h5v5H4zM14 11h5v10h-5z"/><path class="b" d="M4 3h5v13H4z"/><path class="g" d="M14 3h5v8h-5z"/><path d="M1 0v21h21"/></svg></button>

                <button aria-label="Line"><svg viewBox="0 0 22 22"><path d="M1 16l8-11 5 7 7-8"/><path class="bl" d="M1 18l9-9 4 3 4-6 4 2"/><path d="M1 0v21h21"/></svg></button>
                <button aria-label="Area"><svg viewBox="0 0 22 22"><path class="g" d="M12 12l5-11 4 8v12"/><path class="w" d="M1 13L8 2l6 9-6 7z"/><path class="b" d="M1 21v-6l5 3 7-8 8 11z"/></svg></button>
                <button aria-label="Stacked area"><svg viewBox="0 0 22 22"><path class="b" d="M1 3l7 7 7-7 6 4v10l-6-6-6 7-8-7z"/><path d="M1 0v21h21"/></svg></button>
                <button aria-label="100% stacked area"><svg viewBox="0 0 22 22"><path class="b" d="M1 3h20v14l-6-7-5 7-5-6-4 5z"/><path d="M1 0v21h21"/></svg></button>
                <button aria-label="Line and stacked column"><svg viewBox="0 0 22 22"><path class="b" d="M4 3h5v12H4z"/><path class="g" d="M14 3h5v9h-5z"/><path class="w" d="M4 15h5v6H4zM14 12h5v9h-5z"/><path d="M1 20l6-7 5 4 9-8"/><path d="M1 0v21h21"/></svg></button>
                <button aria-label="Line and clustered column"><svg viewBox="0 0 22 22"><path class="b" d="M4 10h4v11H4z"/><path class="w" d="M9 2h5v19H9z"/><path class="g" d="M14 7h4v14h-4z"/><path d="M1 20l6-7 6 4 8-8"/><path d="M1 0v21h21"/></svg></button>

                <button aria-label="Ribbon"><svg viewBox="0 0 22 22"><path class="g" d="M1 3l9 5 10-5v5l-8 5L1 8z"/><path class="o" d="M1 14h5l5-3 9 4v3H1z"/><path class="b" d="M1 8q4 0 6 5 5 4 7-2l6-1v4q-5 0-6 3-7 4-10-2z"/><path d="M1 0v21h21"/></svg></button>
                <button aria-label="Waterfall"><svg viewBox="0 0 22 22"><path class="w" d="M3 7h4v14H3zM8 5h4v14H8zM16 3h4v18h-4z"/><path class="b" d="M12 3h3v10h-3z"/><path d="M1 0v21h21"/></svg></button>
                <button aria-label="Funnel"><svg viewBox="0 0 22 22"><path class="b" d="M1 2h20v5H1zM4 7h14v6H4zM7 13h8v4H7zM8 17h6v3H8z"/></svg></button>
                <button aria-label="Scatter"><svg viewBox="0 0 22 22"><path d="M4 15h3v3H4zM15 2h3v3h-3z" fill="#333"/><path d="M4 6h3v3H4zM10 9h3v3h-3zM15 14h3v3h-3z" fill="#83beec" stroke="#83beec"/><path d="M1 0v21h21"/></svg></button>
                <button aria-label="Pie"><svg viewBox="0 0 22 22"><circle class="w" cx="11" cy="11" r="10"/><path class="b" d="M11 1a10 10 0 0 1 7 17l-7-7z"/></svg></button>
                <button aria-label="Donut"><svg viewBox="0 0 22 22"><circle class="b" cx="11" cy="11" r="10"/><path class="w" d="M11 1v5q-4 1-5 5H1Q2 2 11 1z"/><circle class="w" cx="11" cy="11" r="5"/></svg></button>

                <button aria-label="Treemap"><svg viewBox="0 0 22 22"><path class="w" d="M1 1h20v20H1z"/><path class="b" d="M1 1h10v20H1z"/><path d="M11 7h10M16 7v14M11 14h5M16 14h5"/></svg></button>
                <button aria-label="Map"><svg viewBox="0 0 22 22"><circle class="w" cx="12" cy="9" r="7"/><path d="M9 4l4 1-2 5-4-1zM14 8l4 1-2 4-3-2z" fill="#1d8348" stroke="none"/><path d="M7 1q-7 8 0 14 6 4 11-1M11 17v4M5 21h12"/></svg></button>
                <button aria-label="Filled map"><svg viewBox="0 0 22 22"><path class="g" d="M1 2l6 2 6-2h8v8l-5 8-6 3-6-5-3-7z"/><path class="b" d="M1 2l8 1-1 8-7-2zM14 8l7-1-1 6-4 5-4-2z"/></svg></button>
                <button aria-label="Azure map"><svg viewBox="0 0 22 22"><path d="M14 0l6 21-7-5-10 5z" fill="#3f8fd0" stroke="none"/><path d="M14 0l-1 16 7 5z" fill="#1267b4" stroke="none"/></svg></button>
                <button aria-label="Gauge"><svg viewBox="0 0 22 22"><path class="w" d="M1 16q0-9 10-9t10 9h-6q0-4-4-4t-4 4z"/><path class="b" d="M6 9q5-4 11 0l4 7h-5q-1-4-5-4z"/><path d="M10 16l4-5" stroke-width="2"/></svg></button>
                <button aria-label="Card"><svg viewBox="0 0 22 22"><path class="w" d="M1 3h20v15H1z"/><text x="3" y="13">123</text><path d="M4 15h14" stroke="#999"/></svg></button>

                <button aria-label="Multi-row card"><svg viewBox="0 0 22 22"><path class="w" d="M1 1h20v20H1z"/><path d="M4 4v14M6 9h6M6 16h7" stroke="#999"/><path class="bl" d="M6 6h12M6 13h12" stroke-width="2"/></svg></button>
                <button aria-label="KPI"><svg viewBox="0 0 22 22"><path class="w" d="M1 2h20v16H1z"/><path d="M3 12l4-6 3 6z" fill="#1d8348" stroke="none"/><path d="M11 5h8l-4 7z" fill="#d13438" stroke="none"/><path d="M4 15h14" stroke="#999"/></svg></button>
                <button aria-label="Slicer"><svg viewBox="0 0 22 22"><path class="w" d="M12 21H1V1h20v10"/><path class="g" d="M1 1h20v3H1zM5 8h3v3H5zM5 14h3v3H5z"/><path class="w" d="M11 11h11l-4 5v6h-3v-6z"/></svg></button>
                <button aria-label="Table"><svg viewBox="0 0 22 22"><path class="w" d="M1 1h20v20H1z"/><path class="g" d="M1 1h20v3H1z"/><path d="M1 10h20M1 15h20M8 4v17M14 4v17" stroke="#999"/></svg></button>
                <button aria-label="Matrix"><svg viewBox="0 0 22 22"><path class="w" d="M1 1h20v20H1z"/><path class="g" d="M1 1h20v3H1z"/><path class="b" d="M14 4h7v17H1v-6h13z"/><path d="M1 10h20M1 15h20M8 4v17M14 4v17" stroke="#777"/></svg></button>
                <button aria-label="R script"><svg viewBox="0 0 22 22"><text class="big" x="4" y="17">R</text></svg></button>

                <button aria-label="Python"><svg viewBox="0 0 22 22"><text class="big" x="0" y="17">Py</text></svg></button>
                <button aria-label="Key influencers"><svg viewBox="0 0 22 22"><path d="M1 0v21h21M1 10h11M1 15h6"/><path class="bl" d="M1 5h14"/><circle class="b" cx="17" cy="5" r="3"/><circle class="g" cx="13" cy="10" r="1.500"/><circle class="g" cx="8" cy="15" r="1.500"/></svg></button>
                <button aria-label="Decomposition tree"><svg viewBox="0 0 22 22"><path d="M8 11h6M14 3h-3v16h3"/><path class="b" d="M0 8h8v5H0zM13 1h8v5h-8zM13 8h8v5h-8zM13 15h8v5h-8z"/></svg></button>
                <button aria-label="Q&amp;A"><svg viewBox="0 0 22 22"><path class="w bs" d="M1 2h20v14H10l-5 5v-5H1z"/></svg></button>
                <button aria-label="Narrative"><svg viewBox="0 0 22 22"><path class="w" d="M4 6V1h10l5 5v15H4v-9M13 1v6h6"/><circle class="b" cx="4" cy="9" r="2"/><path class="bl" d="M8 9h8M10 13h6" opacity=".6"/></svg></button>
                <button aria-label="Goals"><svg viewBox="0 0 22 22"><path class="w" d="M5 1h12v8q-1 6-6 6t-6-6zM5 3H1q0 7 5 8M17 3h4q0 7-5 8M11 15v4"/><path class="b" d="M5 1h12v3H5zM6 18h10v3H6z"/></svg></button>

                <button aria-label="Paginated report"><svg viewBox="0 0 22 22"><path class="w" d="M2 1h12l5 5v15H2zM13 1v6h6"/><path d="M5 14h2v4H5zM9 16h2v2H9zM14 11h2v7h-2z" fill="#333"/></svg></button>
                <button aria-label="New card"><svg viewBox="0 0 22 22"><path class="w" d="M1 4h20v15H1z"/><text x="5" y="15">123</text><path class="o" d="M4 0h6L7 5h3L1 13l2-7H0z"/></svg></button>
                <button aria-label="Button slicer"><svg viewBox="0 0 22 22"><path class="w" d="M4 1h16v20H4z"/><path class="b" d="M7 5h4v5H7z"/><path d="M12 1v20M4 11h16"/><path class="w" d="M11 11h11l-4 5v6h-3v-6z"/><path class="o" d="M4 0h6L7 5h3L1 13l2-7H0z"/></svg></button>
                <button aria-label="Text slicer"><svg viewBox="0 0 22 22"><path class="w" d="M2 1h19v20H2z"/><path class="bl" d="M7 18l5-12 4 10"/><path class="w" d="M11 11h11l-4 5v6h-3v-6z"/><path class="o" d="M4 0h6L7 5h3L1 13l2-7H0z"/></svg></button>
                <button aria-label="List slicer"><svg viewBox="0 0 22 22"><path class="w" d="M2 1h19v20H2z"/><path d="M10 7h8M5 13h3v3H5z" stroke="#999"/><path class="w" d="M11 11h11l-4 5v6h-3v-6z"/><path class="o" d="M4 0h6L7 5h3L1 13l2-7H0z"/></svg></button>
                <button aria-label="ArcGIS"><svg viewBox="0 0 22 22"><path class="w bs" d="M1 1h20v20H1z"/><path class="b" d="M1 18l5-4 2-5 5-3 4-5h4v3l-4 2-2 5-5 4-2 5-4 1H1z"/><path d="M0 0h7v7l-3 5-4-5zM16 19a3 3 0 1 0 6 0 3 3 0 1 0-6 0M19 12h3v3h-3z" fill="#ce6b12" stroke="#f3f2f1"/><circle cx="4" cy="4" r="1.500" fill="#fff" stroke="none"/></svg></button>

                <button aria-label="Power Apps"><svg viewBox="0 0 22 22"><path d="M8 2L1 11l7 9 3-3 3 3 7-9-7-9-3 3zM11 5l-3 3 6 6-3 3M14 8l-6 6" stroke="#862a92"/></svg></button>
                <button aria-label="Power Automate"><svg viewBox="0 0 22 22"><path d="M1 2h13l7 9-7 9H1l7-9zM14 2L1 20M17 6L7 20" stroke="#1a76d9"/></svg></button>
                <button class="more" aria-label="More visuals">···</button>
            </div>
            <div class="custom">
                <svg width="22" height="22" viewBox="0 0 22 22"><rect width="22" height="22" rx="2" fill="#111"/><path d="M2 14q0-11 9-11t9 11z" fill="#f2b01e"/><path d="M11 4v11M6 8h10" stroke="#111"/><rect x="0" y="14" width="18" height="7" fill="#e8112d"/><text x="1" y="20">PRO</text></svg>
                <svg width="22" height="22" viewBox="0 0 22 22"><rect width="22" height="22" fill="#fff"/><path d="M1 16h5v5H1z" fill="#e8112d"/><path d="M8 9h5v12H8z" fill="#f2b01e"/><path d="M15 1h5v20h-5z" fill="#5dbb46"/><path d="M1 12h8l9-7" stroke="#555" fill="none"/></svg>
            </div>
            <div class="wells">
                <h4>Values</h4>
                <button class="well">Add data fields here</button>
                <h4>Drill through</h4>
                <label class="switch">Cross-report<input type="checkbox"><span></span></label>
                <label class="switch">Keep all filters<input type="checkbox" checked><span></span></label>
                <button class="well">Add drill-through fields here</button>
            </div>
        </aside>

        <aside class="data">
            <div class="pane-head"><h2>Data</h2><button aria-label="Collapse"><svg width="16" height="16" viewBox="0 0 16 16"><path d="M1 1l7 7-7 7M8 1l7 7-7 7"/></svg></button></div>
            <label class="data-search"><svg width="18" height="18" viewBox="0 0 18 18"><circle cx="7" cy="7" r="6"/><path d="M11 11l6 6"/></svg><input type="text" placeholder="Search" aria-label="Search data"></label>
            <ul>
                <li><a href="#"><svg width="36" height="16" viewBox="0 0 36 16"><path d="M4 2l6 6-6 6" stroke="#605e5c"/><path id="tbl" d="M22 1h10q3 0 3 3v8q0 3-3 3H22q-2 0-2-3V4q0-3 2-3zM20 5h15M20 10h15M25 1v14M30 1v14"/></svg>Dim_Branch</a></li>
                <li><a href="#"><svg width="36" height="16" viewBox="0 0 36 16"><path d="M4 2l6 6-6 6" stroke="#605e5c"/><use href="#tbl"/></svg>Dim_Department</a></li>
                <li><a href="#"><svg width="36" height="16" viewBox="0 0 36 16"><path d="M4 2l6 6-6 6" stroke="#605e5c"/><use href="#tbl"/></svg>Dim_Product</a></li>
                <li><a href="#"><svg width="36" height="16" viewBox="0 0 36 16"><path d="M4 2l6 6-6 6" stroke="#605e5c"/><use href="#tbl"/></svg>Fact_Sales</a></li>
                <li><a href="#"><svg width="36" height="16" viewBox="0 0 36 16"><path d="M4 2l6 6-6 6" stroke="#605e5c"/><use href="#tbl"/></svg>Master product</a></li>
            </ul>
        </aside>
    </div>

    <div class="status">
        <span>Page 1 of 5</span>
        <div class="zoom">
            <b>-</b>
            <input type="range" min="10" max="200" value="94" aria-label="Zoom">
            <b>+</b>
            <span>90%</span>
            <svg width="20" height="16" viewBox="0 0 20 16"><path d="M1 1h18v14H1zM4 6V4h3M13 4h3v2M16 10v2h-3M7 12H4v-2"/></svg>
        </div>
    </div>

    <!-- Windows taskbar -->
    <footer class="taskbar">
        <button class="start" aria-label="Start"><svg width="24" height="24" viewBox="0 0 24 24"><path d="M0 0h11v11H0zM13 0h11v11H13zM0 13h11v11H0zM13 13h11v11H13z" fill="#4cc2f8"/></svg></button>
        <label class="task-search"><svg width="16" height="16" viewBox="0 0 16 16"><circle cx="7" cy="6" r="5"/><path d="M10 10l5 5"/></svg><input type="text" placeholder="Search" aria-label="Search Windows"></label>
        <div class="apps">
            <button class="run" aria-label="Explorer"><svg viewBox="0 0 24 24"><path d="M0 2h9l3 3h12v17H0z" fill="#e0a020"/><path d="M0 8h24v14H0z" fill="#fbc947"/><path d="M5 16q0-2 2-2h10q2 0 2 2v6H5z" fill="#1b76c8"/></svg></button>
            <button aria-label="Store"><svg viewBox="0 0 24 24"><path d="M7 6V2h10v4" fill="none" stroke="#2a9be8" stroke-width="2"/><rect x="1" y="5" width="22" height="18" rx="3" fill="#f4f7fa"/><path d="M7 9h4v4H7z" fill="#e8452c"/><path d="M13 9h4v4h-4z" fill="#7fb516"/><path d="M7 15h4v4H7z" fill="#1a9fe8"/><path d="M13 15h4v4h-4z" fill="#fbb913"/></svg></button>
            <button aria-label="Edge"><svg viewBox="0 0 24 24"><path d="M1 14Q0 1 12 1q11 1 12 10-1 5-8 5-3-1-1-4-2-6-8-4-5 2-6 6z" fill="#35b6a2"/><path d="M1 14Q2 6 9 7q-5 6 1 11 6 3 12 0-5 7-13 5Q1 21 1 14z" fill="#1676c8"/><circle cx="6" cy="18" r="5" fill="#d4a468"/></svg></button>
            <button aria-label="Notion"><svg viewBox="0 0 24 24"><path d="M3 4l14-1 4 3v14l-15 2-3-4z" fill="#fff" stroke="#111"/><path d="M8 19V9l7 9V8" stroke="#111" stroke-width="2" fill="none"/></svg></button>
            <button aria-label="Chrome"><svg viewBox="0 0 24 24"><circle cx="12" cy="12" r="12" fill="#f5c518"/><path d="M12 12L2 5a12 12 0 0 1 21 2z" fill="#e33b2e"/><path d="M12 12l-1 12A12 12 0 0 1 2 5z" fill="#2e9e4f"/><circle cx="12" cy="12" r="5.500" fill="#3b82f0" stroke="#fff" stroke-width="1.500"/><circle cx="18" cy="6" r="6" fill="#3a3a3a"/><path d="M16 4l3 1 1 4-2 1z" fill="#ddd"/></svg></button>
            <button aria-label="VS Code"><svg viewBox="0 0 24 24"><path d="M17 0l6 3v18l-6 3L1 9l3-2 13 10z" fill="#2286ce"/><path d="M17 0v7L4 17l-3-2z" fill="#38a9f0"/></svg></button>
            <button aria-label="LinkedIn"><svg viewBox="0 0 24 24"><rect width="24" height="24" rx="2" fill="#0a66c2"/><path d="M4 10h3v10H4zM4 4h3v3H4zM10 10h3v2q5-4 7 1v7h-3v-6q-2-3-4 0v6h-3z" fill="#fff"/></svg></button>
            <button aria-label="Translate"><svg viewBox="0 0 24 24"><path d="M10 6h13v17H13z" fill="#d5dae2"/><path d="M1 1h12l5 18H1z" fill="#4c8bf5"/><path d="M12 7q-2-2-4-1-4 3-1 7 4 2 5-3H9M15 12h7M18 10v2M20 12q-1 5-4 6" fill="none" stroke="#fff"/></svg></button>
            <button aria-label="ChatGPT"><svg viewBox="0 0 24 24"><rect width="24" height="24" rx="3" fill="#74aa9c"/><g id="knot" fill="none" stroke="#fff" stroke-width="1.200"><path id="petal" d="M9 12V7a3.500 3.500 0 0 1 6-2l-4 2.500v3"/><use href="#petal" transform="rotate(60 12 12)"/><use href="#petal" transform="rotate(120 12 12)"/><use href="#petal" transform="rotate(180 12 12)"/><use href="#petal" transform="rotate(240 12 12)"/><use href="#petal" transform="rotate(300 12 12)"/></g></svg></button>
            <button aria-label="AMD"><svg viewBox="0 0 24 24"><rect width="24" height="24" fill="#e8112d"/><path d="M6 6h12v12l-4-4v-4h-4zM6 12l3-2v5h5l-3 3H6z" fill="#fff"/></svg></button>
            <button class="run" aria-label="GPT 1"><svg viewBox="0 0 24 24"><circle cx="12" cy="12" r="12" fill="#050505"/><use href="#knot"/></svg></button>
            <button aria-label="GPT 2"><svg viewBox="0 0 24 24"><circle cx="12" cy="12" r="12" fill="#050505"/><use href="#knot"/></svg></button>
            <button class="run" aria-label="YouTube"><svg viewBox="0 0 24 24"><rect y="3" width="24" height="18" rx="4" fill="#e8112d"/><path d="M10 8l6 4-6 4z" fill="#fff"/></svg></button>
            <button aria-label="DeepSeek"><svg viewBox="0 0 24 24"><path d="M1 8q5-4 10-1 2-3 1-4 3 0 4 4 3 2 7 0-1 5-4 6-2 7-9 7Q1 19 1 8z" fill="#4a6cf7"/><path d="M5 10q6 0 8 5l4 3M13 9l3 3" stroke="#102735" stroke-width="1.500" fill="none"/></svg></button>
            <button aria-label="Gemini"><svg viewBox="0 0 24 24"><path d="M12 1q1 10 11 11-10 1-11 11Q11 13 1 12q10-1 11-11z" fill="#4f8df0"/></svg></button>
            <button aria-label="Chrome 2"><svg viewBox="0 0 24 24"><circle cx="12" cy="12" r="12" fill="#f5c518"/><path d="M12 12L2 5a12 12 0 0 1 21 2z" fill="#e33b2e"/><path d="M12 12l-1 12A12 12 0 0 1 2 5z" fill="#2e9e4f"/><circle cx="12" cy="12" r="5.500" fill="#3b82f0" stroke="#fff" stroke-width="1.500"/></svg></button>
            <button class="run" aria-label="Media"><svg viewBox="0 0 24 24"><rect width="24" height="24" rx="3" fill="#0a1015"/><path d="M4 3l8 7 8-7v10l-4 2 2 7-6-6-6 6 2-7-4-2z" fill="#1e7db8"/></svg></button>
            <button class="run now" aria-label="Power BI"><svg viewBox="0 0 24 24"><path d="M12 0h9v24h-9z" fill="#e6ad10"/><path d="M7 6h9v18H7z" fill="#f2c230"/><path d="M2 12h9v12H2z" fill="#f9dd78"/></svg></button>
        </div>
        <div class="weather">
            <svg width="28" height="30" viewBox="0 0 28 30"><circle cx="10" cy="18" r="9" fill="#f0a52c"/><path d="M9 25q1-5 5-4 3-4 6 0 4 0 3 4z" fill="#9db9ea"/><circle cx="17" cy="8" r="8" fill="#f4b89a"/><text x="14" y="12">3</text></svg>
            <p>29°C<br><span>Mostly sunny</span></p>
        </div>
        <div class="tray">
            <svg width="12" height="8" viewBox="0 0 12 8"><path d="M1 7l5-5 5 5"/></svg>
            <svg width="18" height="18" viewBox="0 0 18 18"><path d="M8 0l7 3q1 9-7 14-8-5-7-14z" fill="#2a9be8" stroke="none"/><circle cx="12" cy="13" r="5" fill="#218c4a" stroke="none"/><path d="M10 13l2 2 3-4"/></svg>
            <svg width="12" height="18" viewBox="0 0 12 18"><rect width="12" height="18" rx="6" fill="#1a84e8" stroke="none"/><path d="M3 6l6 6-3 3V3l3 3-6 6"/></svg>
            <svg width="18" height="12" viewBox="0 0 18 12"><rect x="1" y="1" width="16" height="10" rx="1"/><path d="M3 4h12M3 6h12" stroke-dasharray="2 1"/><path d="M5 9h8"/></svg>
            <span class="lang">ع</span>
        </div>
        <div class="tray quick">
            <svg width="16" height="14" viewBox="0 0 16 14"><path d="M1 5q7-7 14 0M3 8q5-5 10 0M6 10q2-2 4 0"/><circle cx="8" cy="12" r="1" fill="#fff"/></svg>
            <svg width="16" height="14" viewBox="0 0 16 14"><path d="M1 5h3l4-4v12L4 9H1zM10 5q2 2 0 4"/><path d="M12 3q4 4 0 8" stroke="#7b8b95"/></svg>
            <svg width="18" height="14" viewBox="0 0 18 14"><path d="M3 4h12v9H3zM15 7h2v3h-2" /><path d="M6 6h8v5H5z" fill="#fff"/><path d="M4 0L1 5h4L3 9" /></svg>
            <p class="clock">2:00:56 PM<br>10/26/2025</p>
            <svg width="16" height="18" viewBox="0 0 16 18"><path d="M8 3Q3 2 3 8v4l-2 2h11l-2-2M5 16h3M10 1h5l-5 6h5M7 6h3l-3 4h3"/></svg>
        </div>
        <div class="watermark" dir="rtl">خمسات</div>
    </footer>
</body>
</html>
```
FILE: styles.css
```css
* {
    box-sizing: border-box;
    margin: 0;
    padding: 0;
}

body {
    display: flex;
    flex-direction: column;
    min-height: 100vh;
    font-family: "Open Sans", "Noto Sans", "DejaVu Sans", sans-serif;
    font-size: 13px;
    color: #252423;
    background-color: #f3f2f1;
}

button {
    border: none;
    background: none;
    font: inherit;
    color: inherit;
    cursor: pointer;
}

input {
    border: none;
    background: none;
    font: inherit;
    outline: none;
    min-width: 0;
}

a {
    color: inherit;
    text-decoration: none;
}

svg {
    display: block;
    fill: none;
    flex: none;
}

/* title bar */
.titlebar {
    display: grid;
    grid-template-columns: 740fr 472fr 708fr;
    align-items: center;
    height: 40px;
    background-color: #3b3a38;
    color: #fff;
}

.titlebar svg {
    stroke: #fff;
    stroke-width: 1.2;
}

.title-left {
    display: flex;
    align-items: center;
    padding-left: 11px;
}

.tb-btn {
    width: 36px;
    display: flex;
    justify-content: center;
}

.tb-btn.dim {
    opacity: .35;
}

.file-name {
    margin-top: 8px;
    white-space: nowrap;
}

.titlebar .file-caret {
    fill: #fff;
    stroke: none;
    margin-left: 18px;
}

.title-search {
    display: flex;
    align-items: center;
    gap: 14px;
    height: 28px;
    padding-left: 20px;
    border-radius: 2px;
    background-color: #d4d4d1;
    font-size: 15px;
}

.titlebar .title-search svg {
    stroke: #3b3a39;
}

.title-search input::placeholder {
    color: #41525c;
}

.title-right {
    display: flex;
    align-items: center;
    justify-content: flex-end;
}

.user {
    margin-right: 12px;
    white-space: nowrap;
}

.titlebar .avatar {
    stroke: none;
    margin: 0 17px 6px 0;
}

.win-btn {
    width: 52px;
    display: flex;
    justify-content: center;
}

/* menu */
.menu {
    display: flex;
    align-items: center;
    gap: 36px;
    height: 39px;
    padding: 0 6px 0 26px;
    background-color: #fafafa;
    font-size: 16px;
}

.menu a {
    height: 38px;
    line-height: 37px;
    border-bottom: 4px solid transparent;
}

.menu .file {
    margin-right: 8px;
}

.menu a.active {
    font-weight: 600;
    border-color: #117865;
}

.share-btn {
    display: flex;
    align-items: center;
    gap: 8px;
    height: 28px;
    margin-left: auto;
    padding: 0 8px;
    border-radius: 4px;
    background-color: #117865;
    color: #fff;
    font-size: 13px;
}

.share-btn svg {
    stroke: #fff;
    stroke-width: 1.4;
}

/* ribbon */
.ribbon {
    position: relative;
    z-index: 3;
    display: flex;
    height: 111px;
    padding: 4px 0 2px;
    background-color: #fafafa;
    box-shadow: 0 1px 4px rgba(0, 0, 0, .25);
}

.group {
    display: flex;
    flex-direction: column;
    justify-content: space-between;
    border-right: 1px solid #d0d0d0;
    flex: none;
}

.group h2 {
    font-size: 11px;
    line-height: 16px;
    font-weight: 400;
    text-align: center;
}

.g-clipboard { width: 190px; }
.g-data { width: 424px; }
.g-queries { width: 137px; }
.g-insert { width: 174px; }
.g-calc { width: 221px; }
.g-sens { width: 86px; }
.g-share { width: 71px; }
.g-copilot { width: 155px; }

.tools {
    display: flex;
    justify-content: center;
    padding-top: 4px;
}

.tool {
    display: flow-root;
    min-width: 48px;
    padding: 0 3px;
    font-size: 13px;
    line-height: 19px;
    text-align: center;
    align-self: flex-start;
    white-space: nowrap;
}

.tool svg {
    width: 34px;
    height: 36px;
    margin: 2px auto 4px;
    stroke: #3b3a39;
    stroke-width: 1.4;
    overflow: visible;
}

.tool.prep {
    width: 90px;
    padding: 0;
    white-space: normal;
}

.tool i {
    display: inline-block;
    width: 5px;
    height: 5px;
    margin: 0 2px 3px 5px;
    border: solid #3b3a39;
    border-width: 0 2px 2px 0;
    transform: rotate(45deg);
}

.off {
    color: #c3c2c1;
}

.tool.off i {
    border-color: #b0b0b0;
}

.g-clipboard .tools {
    justify-content: flex-start;
    padding-left: 9px;
}

.g-copilot .tool {
    padding: 0;
}

.mini {
    display: flex;
    flex-direction: column;
    gap: 8px;
    padding-left: 4px;
}

.mini-btn {
    display: flex;
    align-items: center;
    gap: 5px;
    height: 20px;
    color: #c3c2c1;
    white-space: nowrap;
}

.mini-btn svg {
    width: 19px;
    height: 19px;
}

.collapse {
    margin: auto 4px 4px auto;
}

.collapse svg {
    stroke: #252423;
    stroke-width: 2;
}

/* workspace */
.workspace {
    display: flex;
    flex: 1;
}

.rail {
    width: 48px;
    border-right: 1px solid #e1dfdd;
    background-color: #f3f2f1;
}

.rail-btn {
    display: flex;
    align-items: center;
    justify-content: center;
    width: 47px;
    height: 47px;
    padding-bottom: 4px;
    border-left: 3px solid transparent;
}

.rail-btn.active {
    border-color: #117865;
}

.rail-btn svg {
    width: 22px;
    height: 22px;
    stroke: #797775;
    stroke-width: 1.2;
    overflow: visible;
}

.rail-btn text {
    font-size: 8px;
    font-weight: 600;
    fill: #605e5c;
    stroke: none;
}

.center {
    display: flex;
    flex-direction: column;
    flex: 1;
    min-width: 0;
}

.canvas {
    display: flex;
    flex: 1;
    background-color: #fff;
}

/* report page */
.report {
    position: relative;
    display: flex;
    flex: 1;
    min-width: 0;
    margin: 0 22px 8px 24px;
    border: 2px dotted #6f7a96;
    border-top: none;
    background-color: #f5f5f5;
}

.sidebar {
    display: flex;
    flex-direction: column;
    align-items: center;
    width: 56px;
    margin: 7px 0 8px 7px;
    padding-right: 4px;
    background-color: #eceff9;
    box-shadow: 0 0 0 1px #e2e2e4, 10px 0 12px 2px rgba(0, 0, 0, .06), -5px 0 3px #e6e6e6;
}

.side-btn {
    height: 38px;
}

.lines {
    width: 35px;
    height: 14px;
    margin: 44px 10px 25px 0;
    border: solid #4d7cff;
    border-width: 3px 0;
}

.eraser { margin-bottom: 90px; }
.s1 { margin-bottom: 23px; }
.s2 { margin-bottom: 30px; }
.s3 { margin-bottom: 52px; }

.board {
    display: flex;
    flex-direction: column;
    flex: 1;
    gap: 17px;
    padding: 19px 16px 15px 34px;
}

.kpis {
    display: flex;
    gap: 54px;
    height: 108px;
    margin-right: 56px;
    padding-left: 274px;
    border-radius: 6px;
    background-color: #fff;
}

.kpi {
    display: flex;
    flex: 1;
    align-items: center;
}

.tile {
    display: flex;
    align-items: center;
    justify-content: center;
    width: 44px;
    height: 46px;
    border-radius: 6px;
}

.t1 { background-color: #eee9fe; }
.t2 { background-color: #fdeeed; }
.t3 { background-color: #e4f6ff; }
.t4 { background-color: #fbecea; }

.kpi p {
    flex: 1;
    padding: 4px 0 0 4px;
    text-align: center;
    font-size: 15px;
    line-height: 24px;
    color: #6b7a92;
    white-space: nowrap;
}

.kpi b {
    display: block;
    font-size: 21px;
    line-height: 32px;
    color: #252423;
}

.cards {
    display: grid;
    flex: 1;
    grid-template-columns: 635fr 587fr;
    grid-template-rows: 247fr 334fr;
    gap: 22px 23px;
}

.card {
    min-width: 0;
    min-height: 0;
    border-radius: 18px;
    background-color: #fff;
    box-shadow: 4px 5px 14px rgba(0, 0, 0, .04);
}

.card h3 {
    padding-top: 8px;
    font-size: 20px;
    line-height: 30px;
    text-align: center;
}

.plot {
    width: 100%;
}

.months text {
    font-size: 10px;
    fill: #6b7a92;
    text-anchor: end;
}

.axis-title {
    font-size: 13px;
    font-weight: 700;
    fill: #252423;
    text-anchor: middle;
}

.callout,
.legend-title,
.legend {
    font-family: Roboto, "DejaVu Sans", sans-serif;
    font-size: 15px;
    fill: #6b7a92;
}

.legend-title {
    font-weight: 700;
}

.c-map {
    grid-row: 1 / 3;
    grid-column: 2;
    display: flex;
    flex-direction: column;
    padding: 0 12px 12px;
}

.c-map h3 {
    margin-bottom: 1px;
}

/* map */
.map {
    position: relative;
    flex: 1;
    border: 1px solid #777;
    overflow: hidden;
}

.map-svg {
    position: absolute;
    width: 100%;
    height: 100%;
    font-family: "Liberation Sans", Arial, sans-serif;
    font-size: 11px;
}

.map-svg path {
    vector-effect: non-scaling-stroke;
}

.sea { fill: #d9effa; }
.sea.deep { fill: #c9e9f7; }
.lake { fill: #cdecf9; }
.urban { fill: #e4dfc0; }

.river {
    stroke: #b2dcf0;
    stroke-width: 1.2;
}

.border {
    stroke: #8f8f88;
    stroke-width: 1;
}

.road {
    stroke: #ea9d78;
    stroke-width: 1.5;
}

.road.thin {
    stroke: #f0b896;
    stroke-width: 1;
}

.shield path {
    fill: #6b86ab;
    stroke: #fff;
}

.shield text,
.shield-w text {
    font-size: 9px;
    text-anchor: middle;
    fill: #fff;
}

.shield-w path {
    fill: #fff;
    stroke: #777;
}

.shield-w text {
    fill: #333;
}

.city-dots circle {
    fill: #fff;
    stroke: #111;
    stroke-width: 1.3;
}

.city text {
    font-weight: 700;
    fill: #252423;
    stroke: #f7f5d5;
    stroke-width: 2;
    paint-order: stroke;
}

.city .big {
    font-size: 12px;
}

.region text {
    fill: #8b8b84;
}

.water text {
    font-style: italic;
    fill: #6a97bd;
}

.pins circle {
    fill: #4d7cff;
    stroke: #e5ebfd;
    stroke-width: 1;
}

.map-tools {
    position: absolute;
    top: 12px;
    left: 12px;
    width: 34px;
    padding: 2px 0;
    border-radius: 6px;
    background-color: #242424;
    box-shadow: 0 6px 16px rgba(0, 0, 0, .4);
}

.map-tools button {
    display: flex;
    align-items: center;
    justify-content: center;
    width: 34px;
    height: 33px;
}

.map-tools svg {
    width: 17px;
    height: 17px;
    stroke: #c8c8c8;
}

.map-foot {
    position: absolute;
    left: 0;
    right: 0;
    bottom: 0;
    display: flex;
    justify-content: space-between;
    padding: 0 5px;
    background-color: rgba(60, 60, 52, .88);
    color: #fff;
    font-size: 12px;
    line-height: 18px;
}

.powered {
    font-weight: 600;
}

.powered a {
    color: #3f8ee0;
    font-weight: 400;
}

/* slicer panel */
.panel {
    position: absolute;
    top: 19px;
    left: 76px;
    width: 255px;
    padding: 7px 0 6px;
    background-color: #e6e6e6;
    box-shadow: 4px 8px 16px 4px rgba(0, 0, 0, .12);
}

.panel-in {
    margin: 0 2px;
    padding-bottom: 14px;
    border-radius: 48px;
    background-color: #eceff9;
}

.panel-nav {
    display: flex;
    justify-content: flex-end;
    align-items: center;
    gap: 24px;
    height: 46px;
    padding-right: 42px;
}

.panel-nav svg {
    stroke: #6f7a92;
    stroke-width: 3;
}

.slicer {
    display: grid;
    grid-template-columns: 217px 9px;
    align-content: start;
    column-gap: 5px;
    margin: 0 -2px 12px;
    padding: 0 0 0 12px;
    border: 1px solid #fff;
    border-radius: 16px;
    background-color: #eceff9;
}

.slicer legend {
    float: left;
    grid-column: 1 / 3;
    width: 229px;
    padding: 3px 0 0 4px;
    line-height: 38px;
    font-size: 21px;
    font-weight: 700;
    text-align: center;
}

.branch {
    height: 320px;
}

.dept {
    height: 283px;
    margin-bottom: 0;
}

.opts {
    display: flex;
    flex-direction: column;
    gap: 2px;
    height: 263px;
}

.dept .opts {
    height: 220px;
}

.opts label {
    display: flex;
    align-items: center;
    flex: 1;
    min-height: 0;
    border: 2px solid #c9c9cb;
    border-right: 3px solid #252423;
}

.opts input {
    appearance: none;
    width: 20px;
    height: 20px;
    border: 1px solid #4d7cff;
    border-radius: 50%;
    flex: none;
}

.opts span {
    flex: 1;
    padding-top: 10px;
    line-height: 16px;
    font-size: 12px;
    text-align: center;
}

.dept .opts span {
    padding-top: 6px;
}

.thumb {
    height: 40px;
    background-color: #858585;
}

.dept .thumb {
    height: 48px;
}

/* filters strip */
.filters {
    display: flex;
    flex-direction: column;
    align-items: center;
    width: 39px;
    padding-top: 13px;
    border-left: 1px solid #b3b0ad;
}

.filters svg {
    stroke: #252423;
    stroke-width: 1.2;
}

.filters .funnel {
    margin: 20px 0 10px 4px;
}

.filters span {
    writing-mode: vertical-rl;
    font-size: 17px;
    font-weight: 600;
}

/* page tabs */
.pages {
    display: flex;
    height: 43px;
    border-bottom: 1px solid #e1dfdd;
    background-color: #f3f2f1;
    font-size: 13px;
}

.dev {
    display: flex;
    flex-direction: column;
    align-items: center;
    justify-content: center;
    width: 52px;
    padding-bottom: 6px;
}

.dev svg {
    stroke: #605e5c;
    stroke-width: 1.5;
}

.dev.on {
    padding: 4px 0 0;
}

.dev.on::after {
    content: "";
    width: 28px;
    height: 4px;
    margin-top: 7px;
    border-radius: 2px;
    background-color: #117865;
}

.arrow {
    width: 23px;
    display: flex;
    align-items: center;
    justify-content: center;
}

.arrow svg {
    fill: #c4c2c0;
}

.page {
    display: flex;
    align-items: center;
    padding: 0 25px;
    margin-bottom: 2px;
    border-right: 1px solid #c8c6c4;
    background-color: #fff;
    white-space: nowrap;
}

.page.on {
    font-weight: 600;
    border-left: 1px solid #c8c6c4;
    box-shadow: inset 0 -4px #117865;
}

.add {
    display: flex;
    align-items: center;
    justify-content: center;
    width: 47px;
    background-color: #117865;
}

.add svg {
    stroke: #fff;
    stroke-width: 3;
}

/* panes */
.viz,
.data {
    border-left: 1px solid #dddbd9;
    background-color: #f3f2f1;
}

.viz { width: 214px; }
.data { width: 211px; padding: 0 3px 0 5px; }

.pane-head {
    display: flex;
    align-items: center;
    justify-content: space-between;
    height: 42px;
    padding: 0 9px;
}

.pane-head h2 {
    font-size: 18px;
    font-weight: 600;
}

.data .pane-head {
    padding: 0 3px 0 4px;
}

.pane-head svg {
    stroke: #252423;
    stroke-width: 1.4;
}

.viz h3 {
    padding-left: 9px;
    font-size: 13px;
    line-height: 22px;
    font-weight: 600;
}

.modes {
    display: flex;
    gap: 40px;
    padding: 3px 0 0 9px;
}

.mode {
    display: flex;
    align-items: center;
    justify-content: center;
    width: 38px;
    height: 37px;
    border-radius: 3px;
}

.mode.on {
    background-color: #d2d0ce;
}

.notch {
    padding: 4px 0 0 17px;
    border-bottom: 2px solid #c4c2c0;
}

.notch path {
    stroke: #a19f9d;
}

.icons {
    display: grid;
    grid-template-columns: repeat(6, 22px);
    gap: 11px;
    margin: 0 7px;
    padding: 12px 6px 7px;
    border-bottom: 1px dashed #dcdad8;
}

.icons svg {
    width: 22px;
    height: 22px;
    stroke: #3b3a39;
    stroke-width: 1.2;
}

.icons .w { fill: #fafafa; }
.icons .b { fill: #83beec; stroke: #1267b4; }
.icons .g { fill: #c8c6c4; stroke: #797775; }
.icons .o { fill: #f5bd80; stroke: #ce6b12; }
.icons .bl,
.icons .bs { stroke: #1a76c0; }

.icons text {
    font-size: 9px;
    fill: #1a76c0;
    stroke: none;
}

.icons .big {
    font-size: 17px;
    font-weight: 700;
}

.more {
    font-size: 20px;
    line-height: 16px;
}

.custom {
    display: flex;
    gap: 11px;
    padding: 9px 13px 11px;
    border-bottom: 1px solid #dcdad8;
}

.custom text {
    font-size: 7px;
    font-weight: 700;
    fill: #fff;
}

.wells {
    padding: 8px 8px 0 5px;
}

.wells h4 {
    padding-left: 9px;
    font-size: 13px;
    line-height: 20px;
    font-weight: 400;
}

.well {
    display: block;
    width: 100%;
    height: 31px;
    margin: 6px 0 14px;
    padding: 0 10px;
    border: 1px dotted #c8c6c4;
    background-color: #fff;
    text-align: left;
    white-space: nowrap;
}

.switch {
    display: flex;
    align-items: center;
    height: 32px;
    padding: 0 18px 0 9px;
}

.switch:first-of-type {
    margin-top: 4px;
}

.switch input {
    position: absolute;
    opacity: 0;
}

.switch span {
    width: 38px;
    height: 18px;
    margin-left: auto;
    border: 1px solid #605e5c;
    border-radius: 9px;
    background-color: #fff;
    font-size: 10px;
    line-height: 16px;
    text-align: center;
}

.switch span::before {
    content: "";
    display: inline-block;
    width: 8px;
    height: 8px;
    margin-right: 3px;
    border-radius: 50%;
    background-color: #605e5c;
}

.switch span::after {
    content: "Off";
}

.switch input:checked + span {
    border-color: #117865;
    background-color: #117865;
    color: #fff;
}

.switch input:checked + span::before {
    content: "On";
    width: auto;
    height: auto;
    background: none;
}

.switch input:checked + span::after {
    content: "";
    display: inline-block;
    width: 8px;
    height: 8px;
    border-radius: 50%;
    background-color: #fff;
}

.data-search {
    display: flex;
    align-items: center;
    gap: 8px;
    height: 29px;
    margin: 10px 0 10px;
    padding-left: 13px;
    border: 1px solid #d1d1d1;
    border-bottom-color: #616161;
    border-radius: 4px;
    background-color: #fff;
    font-size: 15px;
}

.data-search svg {
    stroke: #605e5c;
}

.data-search input {
    width: 120px;
}

.data-search input::placeholder {
    color: #707070;
}

.data ul {
    list-style: none;
}

.data li a {
    display: flex;
    align-items: center;
    gap: 5px;
    height: 28px;
    padding-left: 9px;
}

.data li svg {
    stroke: #3b3a39;
    stroke-width: 1.3;
}

/* status bar */
.status {
    display: flex;
    align-items: center;
    justify-content: space-between;
    height: 26px;
    padding: 0 19px 0 5px;
    color: #605e5c;
}

.zoom {
    display: flex;
    align-items: center;
    gap: 6px;
    font-size: 12px;
}

.zoom b {
    font-size: 15px;
}

.zoom input {
    appearance: none;
    width: 118px;
    height: 1px;
    background-color: #605e5c;
}

.zoom input::-webkit-slider-thumb {
    appearance: none;
    width: 5px;
    height: 13px;
    background-color: #605e5c;
}

.zoom span {
    margin: 0 18px 0 10px;
}

.zoom svg {
    stroke: #605e5c;
    stroke-width: 1.3;
}

/* taskbar */
.taskbar {
    position: relative;
    display: flex;
    align-items: center;
    height: 49px;
    border-top: 1px solid #2b3a42;
    background-color: #102735;
    color: #fff;
    font-size: 12px;
}

.start {
    padding: 0 13px 0 20px;
}

.task-search {
    display: flex;
    align-items: center;
    gap: 10px;
    width: 220px;
    height: 32px;
    padding-left: 12px;
    border: 1px solid #4a5c66;
    border-radius: 16px;
    background-color: #33464f;
    font-size: 14px;
}

.task-search svg,
.tray svg {
    stroke: #fff;
    stroke-width: 1.3;
}

.task-search input {
    width: 150px;
}

.task-search input::placeholder {
    color: #d0d8dc;
}

.apps {
    display: flex;
    padding-left: 2px;
}

.apps button {
    display: flex;
    flex-direction: column;
    align-items: center;
    width: 44px;
    height: 44px;
    padding-top: 10px;
    border-radius: 4px;
}

.apps svg {
    width: 24px;
    height: 24px;
}

.apps .run::after {
    content: "";
    width: 6px;
    height: 3px;
    margin-top: 5px;
    border-radius: 2px;
    background-color: #97a2a8;
}

.apps .now {
    background-color: #20394a;
}

.apps .now::after {
    width: 16px;
    background-color: #4cc2f8;
}

.weather {
    display: flex;
    align-items: center;
    gap: 2px;
    margin-left: auto;
    line-height: 16px;
}

.weather text {
    font-size: 10px;
    fill: #222;
}

.weather span {
    color: #b9c3c8;
}

.tray {
    display: flex;
    align-items: center;
    gap: 16px;
    margin-left: 60px;
    line-height: 16px;
}

.tray .lang {
    padding: 0 14px 0 10px;
}

.tray.quick {
    gap: 7px;
    margin-left: 12px;
    padding-right: 19px;
}

.tray.quick .clock {
    margin-left: 6px;
}

.clock {
    text-align: right;
}

/* stamp across the taskbar */
.watermark {
    position: absolute;
    left: 845px;
    bottom: 8px;
    width: 230px;
    text-align: center;
    line-height: 70px;
    font-size: 61px;
    font-weight: 700;
    color: #b9bdbf;
    opacity: .35;
    pointer-events: none;
}
```
